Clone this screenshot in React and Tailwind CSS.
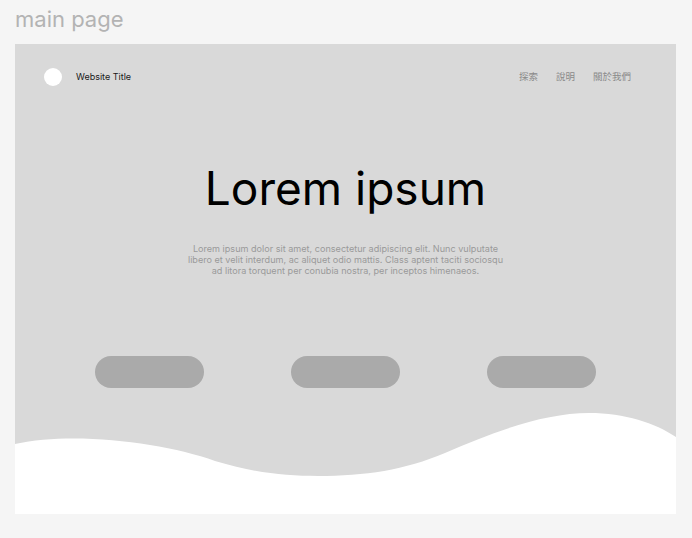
import React from "react";

const navLinks = ["探索", "說明", "關於我們"];

const Wave = () => (
  <svg
    className="block mt-auto w-full h-[101px]"
    viewBox="0 0 661 101"
    preserveAspectRatio="none"
  >
    <path
      d="M0 31 C 60 18, 150 30, 200 48 C 240 60, 270 63, 303 63 C 350 63, 390 57, 430 40 C 480 18, 530 0, 574 0 C 610 0, 640 10, 661 24 V 101 H 0 Z"
      fill="#ffffff"
    />
  </svg>
);

const App = () => {
  return (
    <div className="w-[692px] h-[538px] bg-[#f5f5f5] font-['Inter','Noto_Sans_CJK_TC',sans-serif] overflow-hidden">
      <h1 className="pl-[15px] pt-[8px] text-[22px] leading-[22px] text-[#b3b3b3] font-normal">
        main page
      </h1>
      <div className="mx-[15px] mt-[14px] w-[661px] h-[470px] bg-[#d9d9d9] flex flex-col">
        <nav className="flex items-center justify-between pt-[24px] pl-[29px] pr-[45px]">
          <div className="flex items-center gap-[14px]">
            <div className="w-[18px] h-[18px] rounded-full bg-white" />
            <span className="text-[9px] text-[#1a1a1a]">Website Title</span>
          </div>
          <ul className="flex items-center gap-[18px] text-[9.5px] text-[#8a8a8a]">
            {navLinks.map((l) => (
              <li key={l}>{l}</li>
            ))}
          </ul>
        </nav>

        <h2 className="mt-[79px] text-center text-[46px] leading-[46px] text-black font-normal">
          Lorem ipsum
        </h2>
        <p className="mt-[32px] text-center text-[9.1px] leading-[11px] text-[#9a9a9a]">
          Lorem ipsum dolor sit amet, consectetur adipiscing elit. Nunc vulputate
          <br />
          libero et velit interdum, ac aliquet odio mattis. Class aptent taciti sociosqu
          <br />
          ad litora torquent per conubia nostra, per inceptos himenaeos.
        </p>

        <div className="mt-[80px] flex justify-center gap-[87px]">
          <button className="w-[109px] h-[32px] rounded-full bg-[#aaaaaa]" />
          <button className="w-[109px] h-[32px] rounded-full bg-[#aaaaaa]" />
          <button className="w-[109px] h-[32px] rounded-full bg-[#aaaaaa]" />
        </div>

        <Wave />
      </div>
    </div>
  );
};

export default App;
